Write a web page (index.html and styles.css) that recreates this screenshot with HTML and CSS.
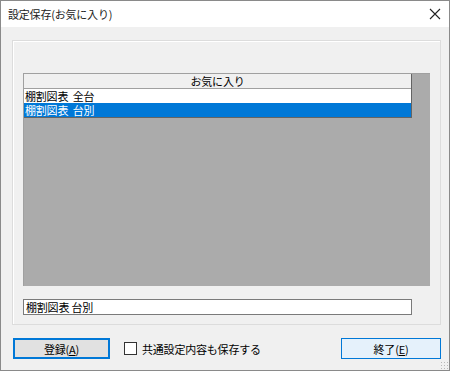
FILE: index.html
```html
<!DOCTYPE html>
<html lang="ja">
<head>
    <meta charset="UTF-8">
    <title>設定保存(お気に入り)</title>
    <link rel="stylesheet" href="styles.css">
</head>
<body>
    <div class="window">
        <div class="titlebar">
            <span class="title">設定保存(お気に入り)</span>
            <svg class="close" width="12" height="12" viewBox="0 0 12 12">
                <path d="M1 1 L11 11 M11 1 L1 11" stroke="#222" stroke-width="1.1" fill="none"/>
            </svg>
        </div>
        <div class="content">
            <div class="groupbox">
                <div class="grid">
                    <div class="rows">
                        <div class="header">お気に入り</div>
                        <div class="row">棚割図表&nbsp;&nbsp;全台</div>
                        <div class="row selected">棚割図表&nbsp;&nbsp;台別</div>
                    </div>
                </div>
                <div class="textbox">棚割図表 台別</div>
            </div>
            <div class="actions">
                <button class="btn btn-default">登録(<u>A</u>)</button>
                <label class="check"><span class="box"></span>共通設定内容も保存する</label>
                <button class="btn btn-hover">終了(<u>E</u>)</button>
            </div>
            <div class="grip"></div>
        </div>
    </div>
</body>
</html>
```

FILE: styles.css
```css
body {
    margin: 0;
    font-family: "Noto Sans CJK JP", "Noto Sans", sans-serif;
    font-size: 11px;
    letter-spacing: -0.2px;
    color: #000;
    background-color: #f0f0f0;
}
.window {
    width: 450px;
    height: 371px;
    box-sizing: border-box;
    border: 1px solid #8a8a8a;
    background-color: #f0f0f0;
    display: flex;
    flex-direction: column;
}
.titlebar {
    height: 26px;
    background-color: #fff;
    display: flex;
    align-items: center;
    justify-content: space-between;
    padding: 0 8px 0 7px;
}
.title {
    color: #222;
}
.content {
    flex: 1;
    position: relative;
    padding: 13px 8px 0 11px;
}
.groupbox {
    height: 285px;
    box-sizing: border-box;
    border: 1px solid #dcdcdc;
    box-shadow: inset 1px 1px 0 #fff;
    padding: 32px 10px 0 10px;
}
.grid {
    height: 213px;
    box-sizing: border-box;
    background-color: #ababab;
    border-top: 1px solid #a0a0a0;
    border-left: 1px solid #a0a0a0;
    padding-right: 18px;
}
.rows {
    border: 1px solid #646464;
    border-top: none;
    border-left: none;
    background-color: #fff;
}
.header {
    height: 14px;
    line-height: 14px;
    text-align: center;
    background-color: #f0f0f0;
    border-bottom: 1px solid #a0a0a0;
}
.row {
    height: 14px;
    line-height: 14px;
    padding-left: 1px;
    white-space: nowrap;
    overflow: hidden;
}
.row.selected {
    background-color: #0078d7;
    color: #fff;
}
.textbox {
    margin-top: 13px;
    width: 389px;
    height: 16px;
    box-sizing: border-box;
    border: 1px solid #7a7a7a;
    background-color: #fff;
    line-height: 14px;
    padding-left: 2px;
}
.actions {
    display: flex;
    align-items: center;
    margin-top: 13px;
    padding-left: 1px;
}
.btn {
    height: 21px;
    font-family: inherit;
    font-size: 11px;
    letter-spacing: -0.2px;
    padding: 0;
    color: #000;
    box-sizing: border-box;
}
.btn-default {
    width: 97px;
    background-color: #e1e1e1;
    border: 2px solid #0078d7;
}
.btn-hover {
    width: 100px;
    margin-left: auto;
    background-color: #e5f1fb;
    border: 1px solid #0078d7;
}
.check {
    display: flex;
    align-items: center;
    margin-left: 14px;
}
.box {
    width: 11px;
    height: 11px;
    border: 1px solid #333;
    background-color: #fff;
    margin-right: 5px;
}
.grip {
    position: absolute;
    right: 1px;
    bottom: 1px;
    width: 8px;
    height: 8px;
    background-image: radial-gradient(circle, #b8b8b8 0.8px, transparent 1px);
    background-size: 3px 3px;
}
```
